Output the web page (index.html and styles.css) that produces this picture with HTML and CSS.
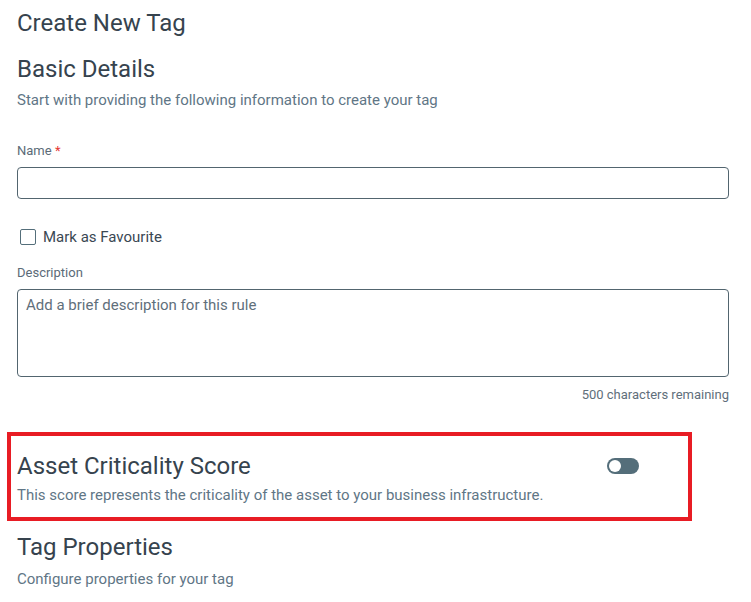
FILE: index.html
```html
<!DOCTYPE html>
<html lang="en">
<head>
<meta charset="utf-8">
<title>Create New Tag</title>
<link rel="stylesheet" href="styles.css">
</head>
<body>
<main class="page">
  <h1 class="title">Create New Tag</h1>
  <h2 class="section-title">Basic Details</h2>
  <p class="subtitle">Start with providing the following information to create your tag</p>

  <label class="field-label field-label--name">Name <span class="req">*</span></label>
  <div class="input"></div>

  <label class="check-row">
    <span class="checkbox"></span>
    <span class="check-text">Mark as Favourite</span>
  </label>

  <label class="field-label field-label--desc">Description</label>
  <div class="textarea"><span class="placeholder">Add a brief description for this rule</span></div>
  <div class="counter">500 characters remaining</div>

  <section class="highlight">
    <div class="highlight-head">
      <h2 class="section-title section-title--flush">Asset Criticality Score</h2>
      <span class="toggle"><span class="knob"></span></span>
    </div>
    <p class="subtitle subtitle--tight">This score represents the criticality of the asset to your business infrastructure.</p>
  </section>

  <h2 class="section-title section-title--props">Tag Properties</h2>
  <p class="subtitle subtitle--props">Configure properties for your tag</p>
</main>
</body>
</html>
```

FILE: styles.css
```css
* { box-sizing: border-box; }
html, body { margin: 0; padding: 0; background: #ffffff; }
body {
  font-family: Roboto, "Liberation Sans", Arial, sans-serif;
  color: #2f3c47;
}
.page {
  padding: 9px 22px 0 17px;
  display: flex;
  flex-direction: column;
  align-items: stretch;
}
.title {
  margin: 0;
  font-size: 24px;
  line-height: 28px;
  font-weight: 400;
  color: #36434e;
}
.section-title {
  margin: 18px 0 0 0;
  font-size: 24px;
  line-height: 28px;
  font-weight: 400;
  color: #36434e;
}
.section-title--flush { margin: 0; }
.section-title--props { margin-top: 12px; }
.subtitle {
  margin: 7px 0 0 0;
  font-size: 15px;
  line-height: 20px;
  color: #5f7686;
}
.subtitle--tight { margin-top: 5px; }
.subtitle--props { margin-top: 8px; }
.field-label {
  display: block;
  font-size: 13px;
  line-height: 16px;
  color: #5b6b78;
}
.field-label--name { margin-top: 33px; }
.field-label--desc { margin-top: 18px; }
.req { color: #e53935; }
.input {
  margin-top: 8px;
  height: 32px;
  border: 1px solid #52656f;
  border-radius: 4px;
}
.check-row {
  margin-top: 28px;
  height: 20px;
  display: flex;
  align-items: center;
  gap: 7px;
  padding-left: 3px;
}
.checkbox {
  width: 16px;
  height: 16px;
  border: 1.5px solid #546e7a;
  border-radius: 2px;
}
.check-text {
  font-size: 15px;
  color: #3a4853;
}
.textarea {
  margin-top: 8px;
  height: 88px;
  border: 1px solid #52656f;
  border-radius: 4px;
  padding: 5px 8px;
}
.placeholder {
  font-size: 15px;
  line-height: 20px;
  color: #5f6f7b;
}
.counter {
  margin-top: 10px;
  text-align: right;
  font-size: 13px;
  line-height: 16px;
  color: #5f6f7b;
}
.highlight {
  margin: 29px 0 0 -10px;
  width: 685px;
  border: 4px solid #e81c24;
  padding: 16px 49px 12px 6px;
}
.highlight-head {
  display: flex;
  align-items: center;
  justify-content: space-between;
}
.toggle {
  width: 32px;
  height: 16px;
  border-radius: 8px;
  background: #546e7a;
  display: flex;
  align-items: center;
  padding-left: 2px;
}
.knob {
  width: 12px;
  height: 12px;
  border-radius: 50%;
  background: #ffffff;
}
```
